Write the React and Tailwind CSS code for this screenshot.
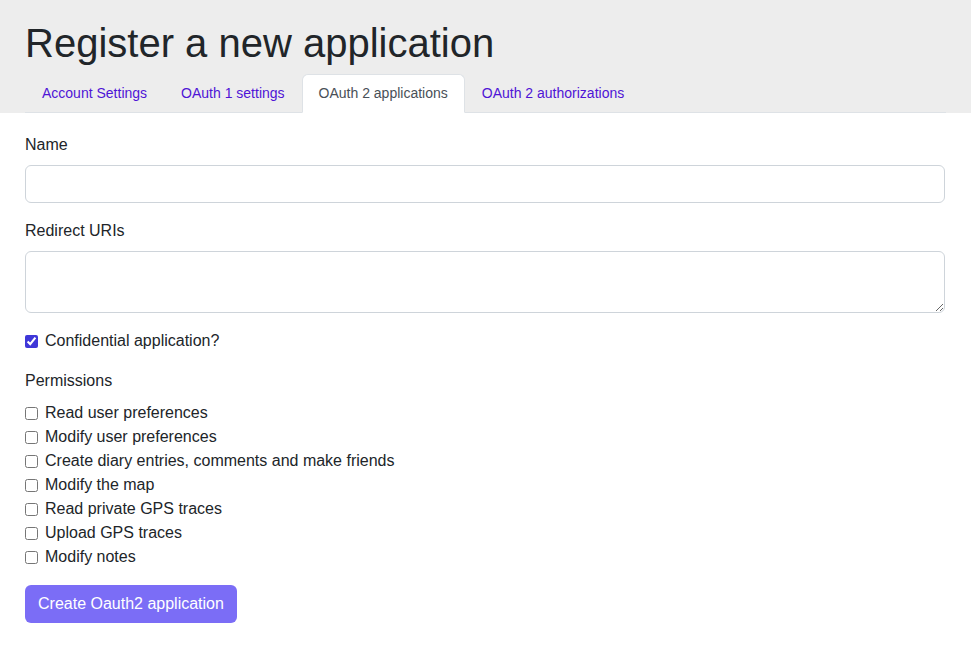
import { useState } from "react";

const tabs = [
  { label: "Account Settings", active: false },
  { label: "OAuth 1 settings", active: false },
  { label: "OAuth 2 applications", active: true },
  { label: "OAuth 2 authorizations", active: false },
];

const permissions = [
  "Read user preferences",
  "Modify user preferences",
  "Create diary entries, comments and make friends",
  "Modify the map",
  "Read private GPS traces",
  "Upload GPS traces",
  "Modify notes",
];

export default function App() {
  const [confidential, setConfidential] = useState(true);

  return (
    <div className="min-h-screen bg-white text-[#212529] font-['Liberation_Sans',Arial,sans-serif]">
      <div className="bg-[#ededed] pt-[19px]">
        <div className="px-[25px]">
          <h1 className="text-[40px] leading-[48px] mb-[7px]">Register a new application</h1>
          <ul className="flex border-b border-[#dee2e6] text-[14px] leading-[21px]">
            {tabs.map((tab) => (
              <li key={tab.label} className="-mb-px">
                <a
                  href="#"
                  className={`block px-4 py-2 border rounded-t-[6px] ${
                    tab.active
                      ? "bg-white border-[#dee2e6] border-b-white text-[#495057]"
                      : "border-transparent text-[#4f14d6]"
                  }`}
                >
                  {tab.label}
                </a>
              </li>
            ))}
          </ul>
        </div>
      </div>

      <form className="px-[25px] pt-5 text-[16px] leading-6 w-[970px]">
        <div className="mb-4">
          <label className="block mb-2">Name</label>
          <input
            type="text"
            className="block w-full h-[38px] border border-[#ced4da] rounded-[6px] px-3"
          />
        </div>

        <div className="mb-4">
          <label className="block mb-2">Redirect URIs</label>
          <textarea className="block w-full h-[62px] border border-[#ced4da] rounded-[6px] px-3 py-1.5" />
        </div>

        <label className="flex items-center gap-[7px] mb-4">
          <input
            type="checkbox"
            checked={confidential}
            onChange={(e) => setConfidential(e.target.checked)}
            className="w-[13px] h-[13px] accent-[#3f37d8]"
          />
          Confidential application?
        </label>

        <div className="mb-2">Permissions</div>
        <div className="mb-4">
          {permissions.map((p) => (
            <label key={p} className="flex items-center gap-[7px]">
              <input type="checkbox" className="w-[13px] h-[13px]" />
              {p}
            </label>
          ))}
        </div>

        <button
          type="button"
          className="bg-[#7b6df6] text-white rounded-[6px] px-[13px] h-[38px]"
        >
          Create Oauth2 application
        </button>
      </form>
    </div>
  );
}
